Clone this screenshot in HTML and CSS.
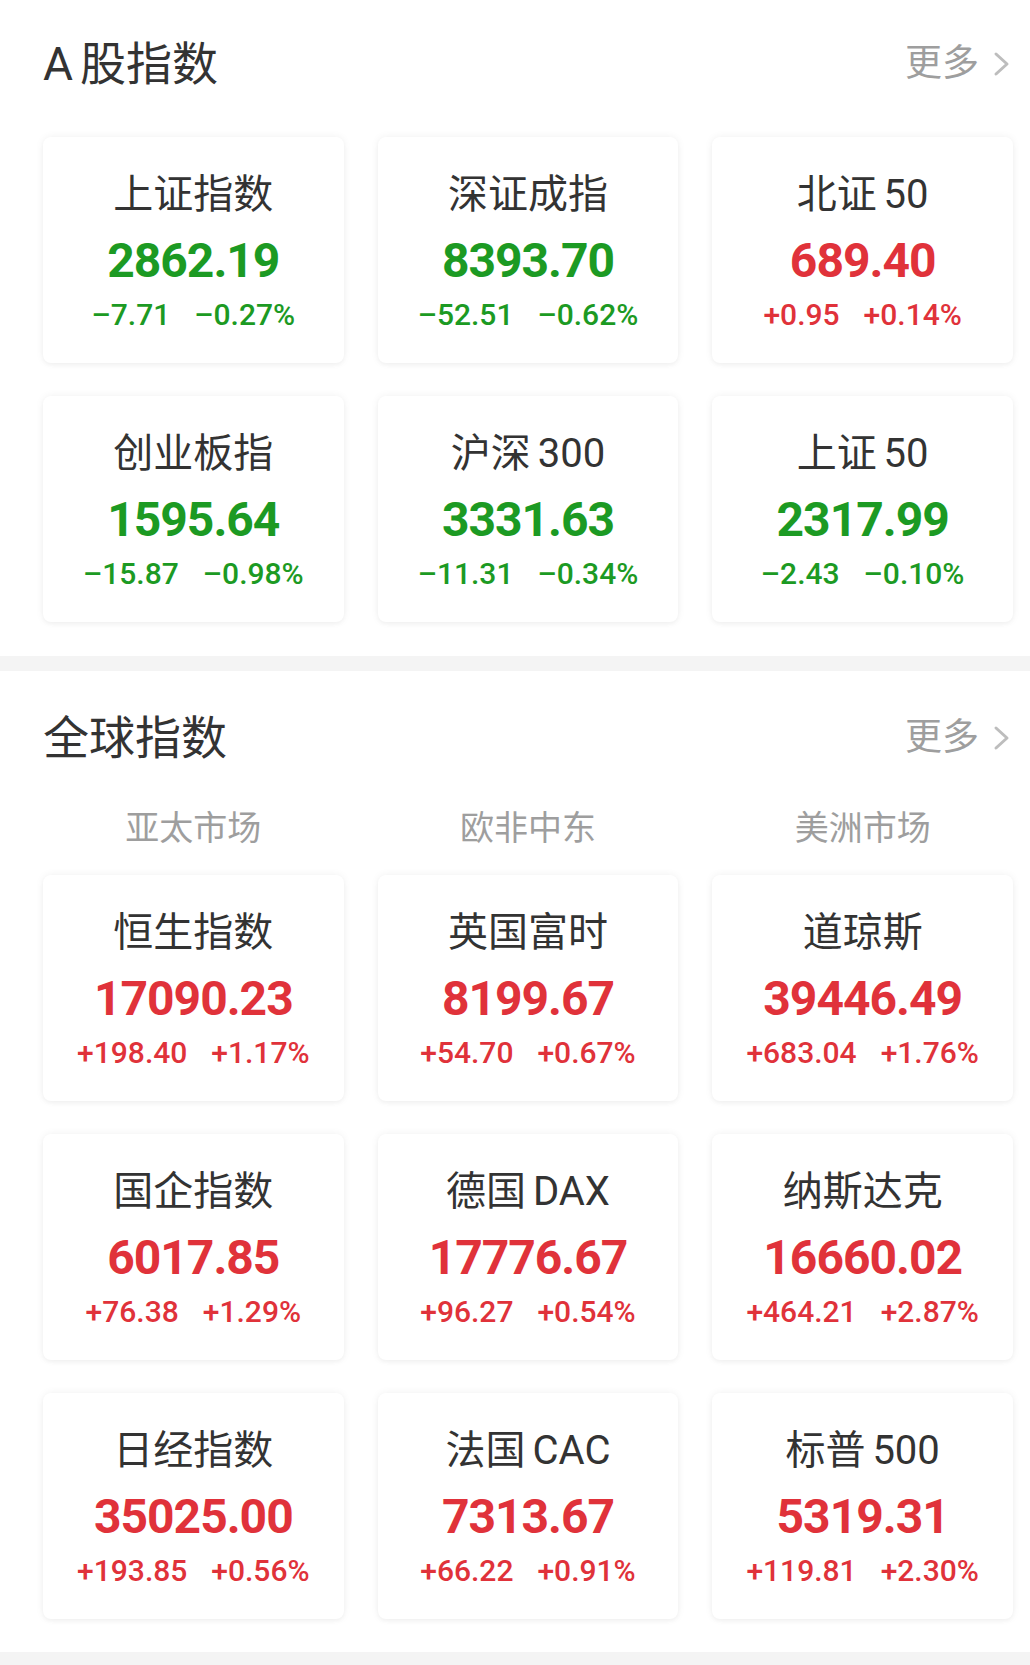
FILE: index.html
```html
<!DOCTYPE html>
<html lang="zh-CN">
<head>
<meta charset="utf-8">
<title>指数</title>
<link rel="stylesheet" href="styles.css">
</head>
<body>
<section class="section section-a">
  <div class="header">
    <h2 class="title"><span class="latin">A</span>股指数</h2>
    <a class="more">更多<svg class="chev" viewBox="0 0 18 26" width="18" height="26"><polyline points="3,3 14,13 3,23" fill="none" stroke="#bdbdbd" stroke-width="3" stroke-linecap="round" stroke-linejoin="round"/></svg></a>
  </div>
  <div class="grid">
    <div class="card down"><div class="name">上证指数</div><div class="value">2862.19</div><div class="change"><span>–7.71</span><span>–0.27%</span></div></div>
    <div class="card down"><div class="name">深证成指</div><div class="value">8393.70</div><div class="change"><span>–52.51</span><span>–0.62%</span></div></div>
    <div class="card up"><div class="name">北证 50</div><div class="value">689.40</div><div class="change"><span>+0.95</span><span>+0.14%</span></div></div>
    <div class="card down"><div class="name">创业板指</div><div class="value">1595.64</div><div class="change"><span>–15.87</span><span>–0.98%</span></div></div>
    <div class="card down"><div class="name">沪深 300</div><div class="value">3331.63</div><div class="change"><span>–11.31</span><span>–0.34%</span></div></div>
    <div class="card down"><div class="name">上证 50</div><div class="value">2317.99</div><div class="change"><span>–2.43</span><span>–0.10%</span></div></div>
  </div>
</section>
<div class="divider"></div>
<section class="section section-b">
  <div class="header">
    <h2 class="title">全球指数</h2>
    <a class="more">更多<svg class="chev" viewBox="0 0 18 26" width="18" height="26"><polyline points="3,3 14,13 3,23" fill="none" stroke="#bdbdbd" stroke-width="3" stroke-linecap="round" stroke-linejoin="round"/></svg></a>
  </div>
  <div class="tabs">
    <div class="tab">亚太市场</div>
    <div class="tab">欧非中东</div>
    <div class="tab">美洲市场</div>
  </div>
  <div class="grid">
    <div class="card up"><div class="name">恒生指数</div><div class="value">17090.23</div><div class="change"><span>+198.40</span><span>+1.17%</span></div></div>
    <div class="card up"><div class="name">英国富时</div><div class="value">8199.67</div><div class="change"><span>+54.70</span><span>+0.67%</span></div></div>
    <div class="card up"><div class="name">道琼斯</div><div class="value">39446.49</div><div class="change"><span>+683.04</span><span>+1.76%</span></div></div>
    <div class="card up"><div class="name">国企指数</div><div class="value">6017.85</div><div class="change"><span>+76.38</span><span>+1.29%</span></div></div>
    <div class="card up"><div class="name">德国 DAX</div><div class="value">17776.67</div><div class="change"><span>+96.27</span><span>+0.54%</span></div></div>
    <div class="card up"><div class="name">纳斯达克</div><div class="value">16660.02</div><div class="change"><span>+464.21</span><span>+2.87%</span></div></div>
    <div class="card up"><div class="name">日经指数</div><div class="value">35025.00</div><div class="change"><span>+193.85</span><span>+0.56%</span></div></div>
    <div class="card up"><div class="name">法国 CAC</div><div class="value">7313.67</div><div class="change"><span>+66.22</span><span>+0.91%</span></div></div>
    <div class="card up"><div class="name">标普 500</div><div class="value">5319.31</div><div class="change"><span>+119.81</span><span>+2.30%</span></div></div>
  </div>
</section>
<div class="divider"></div>
</body>
</html>
```

FILE: styles.css
```css
* { box-sizing: border-box; }
html, body {
  margin: 0;
  padding: 0;
  background: #ffffff;
}
body {
  font-family: Roboto, "Noto Sans CJK SC", sans-serif;
  color: #333333;
}
.section {
  padding: 41px 17px 34px 43px;
}
.section-b {
  padding-top: 44px;
  padding-bottom: 33px;
}
.header {
  display: flex;
  align-items: center;
  justify-content: space-between;
  height: 46px;
}
.title {
  margin: 0;
  font-size: 46px;
  line-height: 46px;
  font-weight: 400;
  color: #333333;
}
.latin {
  margin-right: 7px;
}
.more {
  display: flex;
  align-items: center;
  gap: 14px;
  font-size: 37px;
  line-height: 46px;
  color: #9e9e9e;
  padding-right: 2px;
}
.chev { display: block; }
.section-a .grid { margin-top: 50px; }
.tabs {
  display: grid;
  grid-template-columns: repeat(3, 1fr);
  column-gap: 34px;
  margin-top: 47px;
}
.tab {
  text-align: center;
  font-size: 34px;
  line-height: 40px;
  color: #9e9e9e;
}
.section-b .grid { margin-top: 27px; }
.grid {
  display: grid;
  grid-template-columns: repeat(3, 1fr);
  column-gap: 34px;
  row-gap: 33px;
}
.card {
  height: 226px;
  background: #ffffff;
  border-radius: 8px;
  box-shadow: 0 0 8px rgba(0, 0, 0, 0.06), 0 2px 4px rgba(0, 0, 0, 0.03);
  display: flex;
  flex-direction: column;
  align-items: center;
  padding-top: 36px;
}
.name {
  font-size: 40px;
  line-height: 44px;
  color: #333333;
  white-space: nowrap;
  word-spacing: -3px;
}
.value {
  margin-top: 18px;
  font-size: 48px;
  line-height: 52px;
  font-weight: 700;
  letter-spacing: -1px;
}
.change {
  margin-top: 11px;
  display: flex;
  gap: 24px;
  font-size: 30px;
  line-height: 34px;
  font-weight: 500;
}
.down .value, .down .change { color: #1c9a23; }
.up .value, .up .change { color: #e0323a; }
.divider {
  height: 15px;
  background: #f4f4f4;
}
```
